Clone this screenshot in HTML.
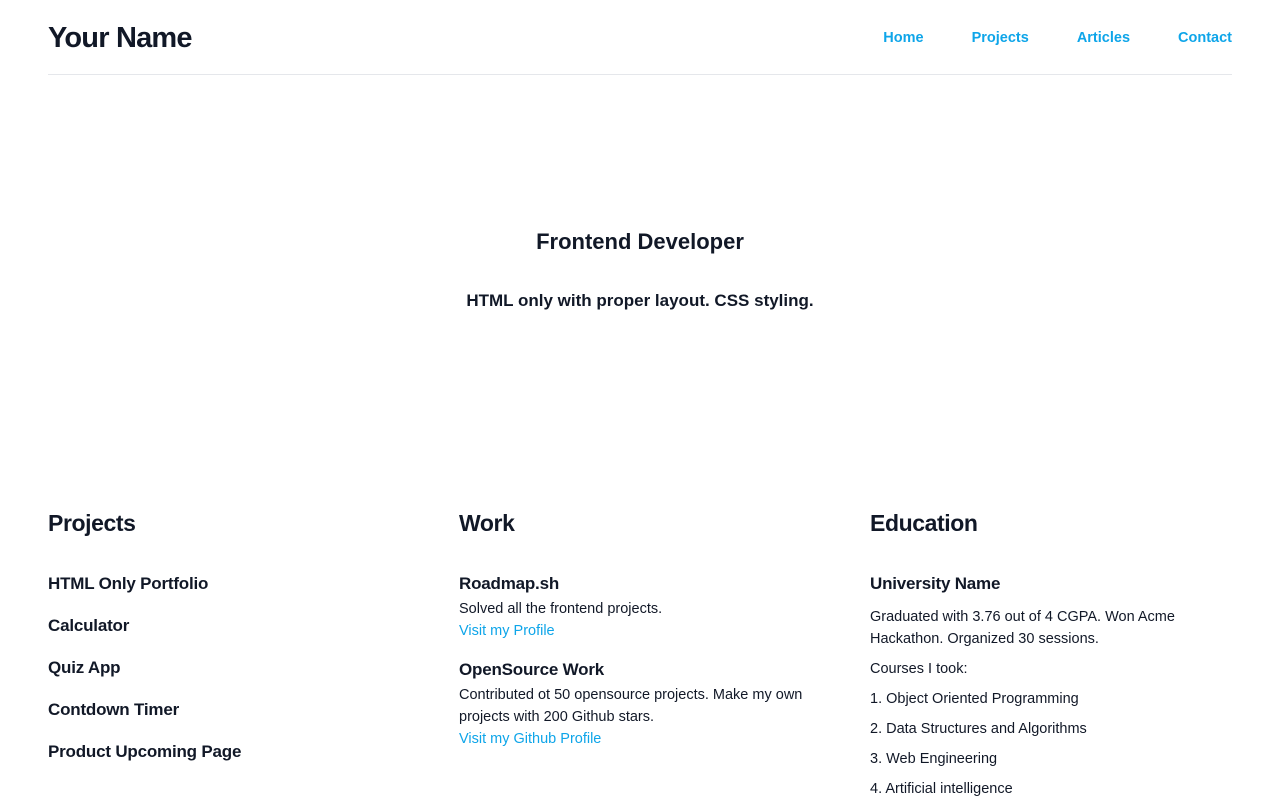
<!DOCTYPE html>
<html><head><meta charset="utf-8">
<style>
*{margin:0;padding:0;box-sizing:border-box}
body{width:1280px;height:800px;overflow:hidden;background:#fff;color:#111827;font-family:"Liberation Sans",sans-serif}
a{color:#0ea5e9;text-decoration:none}
.hdr{position:absolute;left:48px;right:48px;top:0;height:75px;border-bottom:1px solid #e5e7eb}
.logo{position:absolute;left:0;top:22px;font-size:29px;font-weight:bold;letter-spacing:-0.8px}
.nav{position:absolute;right:0;top:30px;font-size:14.5px;font-weight:600}
.nav a{margin-left:48px}
.h1{position:absolute;top:229px;width:1280px;text-align:center;font-size:22px;font-weight:bold}
.h2{position:absolute;top:291px;width:1280px;text-align:center;font-size:17px;font-weight:bold}
.col{position:absolute;top:510px;width:360px}
.col h3{font-size:23px;font-weight:bold;letter-spacing:-0.4px;height:64px}
.col .t{font-size:17px;font-weight:bold;letter-spacing:-0.2px}
.p .t{margin-bottom:22px}
.col p,.col .l{font-size:14.5px;line-height:22px}
</style></head><body>
<div class="hdr"><div class="logo">Your Name</div>
<div class="nav"><a>Home</a><a>Projects</a><a>Articles</a><a>Contact</a></div></div>
<div class="h1">Frontend Developer</div>
<div class="h2">HTML only with proper layout. CSS styling.</div>
<div class="col p" style="left:48px"><h3>Projects</h3>
<div class="t">HTML Only Portfolio</div><div class="t">Calculator</div><div class="t">Quiz App</div><div class="t">Contdown Timer</div><div class="t">Product Upcoming Page</div></div>
<div class="col" style="left:459px"><h3>Work</h3>
<div class="t" style="margin-bottom:4px">Roadmap.sh</div><p>Solved all the frontend projects.</p><p><a>Visit my Profile</a></p>
<div class="t" style="margin-top:18px;margin-bottom:4px">OpenSource Work</div><p>Contributed ot 50 opensource projects. Make my own projects with 200 Github stars.</p><p><a>Visit my Github Profile</a></p></div>
<div class="col" style="left:870px"><h3>Education</h3>
<div class="t" style="margin-bottom:12px">University Name</div>
<p>Graduated with 3.76 out of 4 CGPA. Won Acme Hackathon. Organized 30 sessions.</p>
<p style="margin-top:8px">Courses I took:</p>
<p style="margin-top:8px">1. Object Oriented Programming</p>
<p style="margin-top:8px">2. Data Structures and Algorithms</p>
<p style="margin-top:8px">3. Web Engineering</p>
<p style="margin-top:8px">4. Artificial intelligence</p></div>
</body></html>
